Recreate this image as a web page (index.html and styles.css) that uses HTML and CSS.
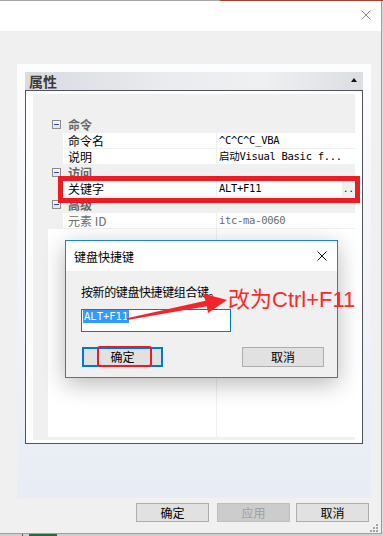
FILE: index.html
```html
<!DOCTYPE html>
<html lang="zh">
<head>
<meta charset="UTF-8" />
<meta name="viewport" content="width=device-width, initial-scale=1" />
<title>属性 - 键盘快捷键</title>
<link rel="stylesheet" href="styles.css">
</head>
<body>

<div class="topline"><span class="tl-left"></span><span class="tl-right"></span></div>

<div class="window">
  <div class="titlebar">
    <svg class="x-icon" width="10" height="10" viewBox="0 0 10 10"><path d="M0.5 0.5L9.5 9.5M9.5 0.5L0.5 9.5" stroke="#8a8a8a" stroke-width="1"/></svg>
  </div>

  <div class="client">
    <div class="panel">
      <div class="sec-head"><span>属性</span><i class="caret"></i></div>

      <div class="grid-box">
        <div class="grid">
          <div class="cat"><span class="minus"></span>命令</div>
          <div class="row"><div class="name">命令名</div><div class="val">^C^C^C_VBA</div></div>
          <div class="row"><div class="name">说明</div><div class="val">启动Visual Basic f...</div></div>
          <div class="cat"><span class="minus"></span>访问</div>
          <div class="row"><div class="name">关键字</div><div class="val key"><span class="v">ALT+F11</span><span class="dots">..</span></div></div>
          <div class="cat"><span class="minus"></span>高级</div>
          <div class="row readonly"><div class="name">元素 ID</div><div class="val">itc-ma-0060</div></div>
          <div class="filler"><div class="f-name"></div><div class="f-val"></div></div>
        </div>
      </div>
    </div>

    <div class="footer">
      <button class="btn">确定</button>
      <button class="btn disabled">应用</button>
      <button class="btn">取消</button>
    </div>
  </div>

  <div class="grip">
    <i class="g1"></i><i class="g2"></i><i class="g3"></i><i class="g4"></i><i class="g5"></i><i class="g6"></i>
  </div>
</div>

<div class="behind"><span class="b-gap"></span><span class="b-line"></span><span class="b-gap2"></span><span class="b-green"></span></div>

<!-- shortcut dialog on top of the properties window -->
<div class="dialog">
  <div class="dlg-title">
    <span>键盘快捷键</span>
    <svg class="x-icon" width="10" height="10" viewBox="0 0 10 10"><path d="M0.5 0.5L9.5 9.5M9.5 0.5L0.5 9.5" stroke="#111" stroke-width="1"/></svg>
  </div>
  <div class="dlg-body">
    <p class="dlg-label">按新的键盘快捷键组合键。</p>
    <div class="dlg-input"><span class="sel">ALT+F11</span></div>
    <div class="dlg-buttons">
      <button class="dbtn default">确定</button>
      <button class="dbtn">取消</button>
    </div>
  </div>
</div>

<!-- red annotations -->
<div class="mark-key"></div>
<div class="mark-ok"></div>
<svg class="mark-arrow" width="383" height="536" viewBox="0 0 383 536">
  <polygon points="126.9,318.3 205.5,300.8 203,293.5 227,300 208,313 206.8,306.3 127.1,319.9" fill="#f5232a"/>
</svg>
<div class="mark-text">改为Ctrl+F11</div>

</body>
</html>
```

FILE: styles.css
```css
* {
  box-sizing: border-box;
}
html, body {
  margin: 0;
}
body {
  width: 383px;
  height: 536px;
  overflow: hidden;
  position: relative;
  background: #dcdcdc;
  font-family: "Noto Sans CJK SC", "Liberation Sans", sans-serif;
  font-size: 12px;
  color: #000;
}
button {
  font-family: inherit;
  font-size: 12px;
  padding: 0;
  color: #000;
}

.topline {
  display: flex;
  height: 1px;
}
.tl-left {
  width: 220px;
  background: #a6a6a6;
}
.tl-right {
  flex: 1;
  background: #a3452e;
}

.window {
  width: 382px;
  border-right: 1px solid #9c9c9c;
  position: relative;
}
.titlebar {
  height: 30px;
  background: #fff;
  display: flex;
  justify-content: flex-end;
  align-items: flex-start;
  padding: 9px 10px 0 0;
}
.x-icon {
  display: block;
}
.client {
  background: #f0f0f0;
  padding: 33px 10px 11px 17px;
  border-bottom: 1px solid #a0a0a0;
}

.panel {
  height: 434px;
  padding: 8px 8px 0;
  background: linear-gradient(#fdfdfe, #f3f5f9 40%, #e8ecf4);
}
.sec-head {
  height: 18px;
  display: flex;
  align-items: center;
  justify-content: space-between;
  padding: 0 6px 0 4px;
  background: linear-gradient(to right, #d8dbe0, #e9ebee 40%, #eff0f2 70%, #dbdee2);
  font-size: 14px;
  font-weight: bold;
  color: #3a3a3a;
  line-height: 18px;
}
.caret {
  width: 0;
  height: 0;
  border-left: 3px solid transparent;
  border-right: 3px solid transparent;
  border-bottom: 4px solid #111;
  margin-bottom: 2px;
}

.grid-box {
  height: 354px;
  border: 1px solid #4f525a;
  background: #fff;
  padding: 3px 7px 3px 7px;
}
.grid {
  height: 100%;
  background: #f0f0f0;
  padding: 23px 0 3px;
  display: flex;
  flex-direction: column;
}
.row, .cat {
  height: 15px;
  margin-bottom: 1px;
  display: flex;
  line-height: 15px;
  flex-shrink: 0;
}
.cat {
  padding-left: 19px;
  align-items: center;
  color: #666;
  font-weight: bold;
}
.minus {
  width: 9px;
  height: 9px;
  margin-right: 7px;
  border: 1px solid #8d8d8d;
  background: linear-gradient(#fff, #e4e4e4);
  position: relative;
}
.minus::after {
  content: "";
  position: absolute;
  left: 1px;
  top: 3px;
  width: 5px;
  height: 1px;
  background: #2f4a9d;
}
.row .name {
  margin-left: 30px;
  width: 153px;
  background: #fff;
  padding-left: 5px;
}
.row .val {
  margin-left: 1px;
  flex: 1;
  background: #fff;
  padding-left: 2px;
  font-family: "DejaVu Sans Mono", "Noto Sans CJK SC", monospace;
  font-size: 10.5px;
  letter-spacing: -0.3px;
  white-space: nowrap;
  overflow: hidden;
}
.row.readonly .name,
.row.readonly .val {
  color: #6d6d6d;
}
.val.key {
  display: flex;
  padding-left: 0;
}
.val.key .v {
  flex: 1;
  padding-left: 2px;
  background: #fff;
}
.val.key .dots {
  width: 13px;
  background: #f0f0f0;
  font-size: 9px;
  letter-spacing: 0;
  text-align: center;
  line-height: 17px;
}
.filler {
  flex: 1;
  margin-left: 15px;
  display: flex;
}
.f-name {
  width: 168px;
  background: #fff;
}
.f-val {
  flex: 1;
  margin-left: 1px;
  background: #fff;
}

.footer {
  display: flex;
  justify-content: flex-end;
  padding: 5px 2px 0 0;
}
.btn {
  width: 73px;
  height: 19px;
  border: 1px solid #adadad;
  background: #e1e1e1;
  line-height: 17px;
  margin-left: 6px;
}
.btn:first-child {
  margin-left: 0;
}
.btn.disabled {
  margin-left: 8px;
  background: #cccccc;
  border-color: #bfbfbf;
  color: #a0a0a0;
}

.grip {
  position: absolute;
  right: 3px;
  bottom: 2px;
  width: 8px;
  height: 8px;
}
.grip i {
  position: absolute;
  width: 2px;
  height: 2px;
  background: #a3a3a3;
}
.grip .g1 { left: 6px; top: 0; }
.grip .g2 { left: 3px; top: 3px; }
.grip .g3 { left: 6px; top: 3px; }
.grip .g4 { left: 0; top: 6px; }
.grip .g5 { left: 3px; top: 6px; }
.grip .g6 { left: 6px; top: 6px; }

.behind {
  display: flex;
  height: 2px;
  background: #cfcfcf;
}
.b-gap { width: 22px; }
.b-line { width: 1px; background: #555; }
.b-gap2 { width: 6px; }
.b-green { width: 28px; background: #1f6b3a; }

/* dialog */
.dialog {
  position: absolute;
  left: 65px;
  top: 240px;
  width: 273px;
  height: 138px;
  border: 1px solid #1883d7;
  background: #f0f0f0;
  box-shadow: 0 6px 22px rgba(0, 0, 0, 0.28);
}
.dlg-title {
  height: 30px;
  background: #fff;
  display: flex;
  align-items: center;
  justify-content: space-between;
  padding: 0 10px 0 8px;
}
.dlg-body {
  padding: 13px 13px 0 15px;
}
.dlg-label {
  margin: 0;
  line-height: 16px;
  letter-spacing: -0.4px;
}
.dlg-input {
  margin-top: 9px;
  width: 150px;
  height: 23px;
  border: 1px solid #0078d7;
  background: #fff;
  padding-left: 1px;
}
.dlg-input .sel {
  display: inline-block;
  vertical-align: top;
  background: #3399ff;
  color: #fff;
  font-family: "DejaVu Sans Mono", monospace;
  font-size: 10.5px;
  line-height: 13px;
  padding: 0 1px;
}
.dlg-buttons {
  margin-top: 15px;
  display: flex;
  justify-content: space-between;
  padding-left: 1px;
}
.dbtn {
  width: 82px;
  height: 20px;
  border: 1px solid #adadad;
  background: #e1e1e1;
  line-height: 18px;
}
.dbtn.default {
  width: 81px;
  border: 2px solid #0078d7;
  line-height: 16px;
}

/* annotations */
.mark-key {
  position: absolute;
  left: 58px;
  top: 176px;
  width: 302px;
  height: 27px;
  border: 5px solid #ed1c24;
}
.mark-ok {
  position: absolute;
  left: 97px;
  top: 346px;
  width: 55px;
  height: 21px;
  border: 2px solid #e81c24;
  border-radius: 3px;
}
.mark-arrow {
  position: absolute;
  left: 0;
  top: 0;
  pointer-events: none;
}
.mark-text {
  position: absolute;
  left: 228px;
  top: 289px;
  font-family: "Liberation Sans", "Noto Sans CJK SC", sans-serif;
  font-size: 22px;
  line-height: 22px;
  color: #fb2a2a;
  white-space: nowrap;
}
```
